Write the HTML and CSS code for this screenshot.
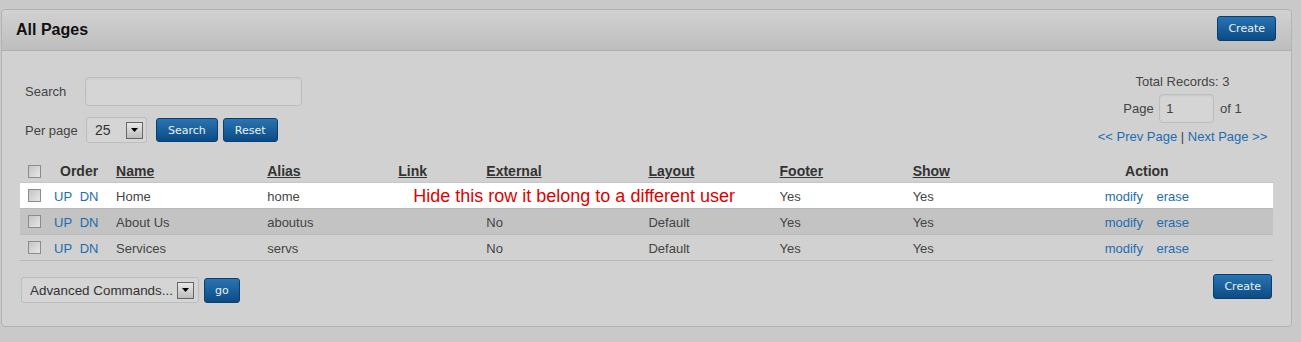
FILE: index.html
```html
<!DOCTYPE html>
<html lang="en">
<head>
    <meta charset="UTF-8">
    <title>All Pages</title>
    <link rel="stylesheet" href="styles.css">
</head>
<body>

    <div class="panel">
        <div class="panel-head">
            <h2>All Pages</h2>
            <button class="btn">Create</button>
        </div>

        <div class="panel-body">
            <div class="filters">
                <div class="filter-left">
                    <div class="filter-row">
                        <label class="lbl">Search</label>
                        <input class="field search-field" type="text">
                    </div>
                    <div class="filter-row row-gap">
                        <label class="lbl">Per page</label>
                        <div class="fake-select per-page">
                            <span>25</span>
                            <span class="arrow"><svg width="7" height="4" viewBox="0 0 7 4"><path d="M0 0h7L3.5 4z" fill="#000"/></svg></span>
                        </div>
                        <button class="btn btn-sm">Search</button>
                        <button class="btn btn-sm">Reset</button>
                    </div>
                </div>
                <div class="filter-right">
                    <div class="total">Total Records: 3</div>
                    <div class="pager">Page <input class="field page-field" type="text" value="1"> of 1</div>
                    <div class="pager-links"><a href="#">&lt;&lt; Prev Page</a> | <a href="#">Next Page &gt;&gt;</a></div>
                </div>
            </div>

            <table class="grid">
                <colgroup>
                    <col style="width:28px">
                    <col style="width:62px">
                    <col style="width:151px">
                    <col style="width:131px">
                    <col style="width:88px">
                    <col style="width:162px">
                    <col style="width:131px">
                    <col style="width:133px">
                    <col style="width:114px">
                    <col style="width:252px">
                </colgroup>
                <tr>
                    <th class="chk"><input type="checkbox"></th>
                    <th class="order">Order</th>
                    <th><a href="#">Name</a></th>
                    <th><a href="#">Alias</a></th>
                    <th><a href="#">Link</a></th>
                    <th><a href="#">External</a></th>
                    <th><a href="#">Layout</a></th>
                    <th><a href="#">Footer</a></th>
                    <th><a href="#">Show</a></th>
                    <th class="action">Action</th>
                </tr>
                <tr class="hidden-row">
                    <td class="chk"><input type="checkbox"></td>
                    <td class="order"><a href="#">UP</a> <a href="#">DN</a></td>
                    <td>Home</td>
                    <td>home</td>
                    <td colspan="3" class="note">Hide this row it belong to a different user</td>
                    <td>Yes</td>
                    <td>Yes</td>
                    <td class="action"><a href="#">modify</a> <a href="#">erase</a></td>
                </tr>
                <tr class="alt">
                    <td class="chk"><input type="checkbox"></td>
                    <td class="order"><a href="#">UP</a> <a href="#">DN</a></td>
                    <td>About Us</td>
                    <td>aboutus</td>
                    <td></td>
                    <td>No</td>
                    <td>Default</td>
                    <td>Yes</td>
                    <td>Yes</td>
                    <td class="action"><a href="#">modify</a> <a href="#">erase</a></td>
                </tr>
                <tr>
                    <td class="chk"><input type="checkbox"></td>
                    <td class="order"><a href="#">UP</a> <a href="#">DN</a></td>
                    <td>Services</td>
                    <td>servs</td>
                    <td></td>
                    <td>No</td>
                    <td>Default</td>
                    <td>Yes</td>
                    <td>Yes</td>
                    <td class="action"><a href="#">modify</a> <a href="#">erase</a></td>
                </tr>
            </table>

            <div class="panel-foot">
                <div class="commands">
                    <div class="fake-select adv">
                        <span class="adv-text">Advanced Commands...</span>
                        <span class="arrow"><svg width="7" height="4" viewBox="0 0 7 4"><path d="M0 0h7L3.5 4z" fill="#000"/></svg></span>
                    </div>
                    <button class="btn btn-go">go</button>
                </div>
                <button class="btn">Create</button>
            </div>
        </div>
    </div>

</body>
</html>
```

FILE: styles.css
```css
body {
    margin: 0;
    background-color: #c9c9c9;
    font-family: Arial, "Liberation Sans", sans-serif;
    font-size: 13px;
    color: #444;
}
a {
    color: #1f6db0;
    text-decoration: none;
}
.panel {
    margin: 9px 9px 0 1px;
    height: 318px;
    box-sizing: border-box;
    background-color: #d1d1d1;
    border: 1px solid #b3b3b3;
    border-radius: 4px;
}
.panel-head {
    height: 40px;
    display: flex;
    align-items: center;
    justify-content: space-between;
    padding: 0 14px 0 14px;
    background: linear-gradient(#d2d2d2, #bebebe);
    border-bottom: 1px solid #b0b0b0;
    border-radius: 4px 4px 0 0;
}
.panel-head h2 {
    margin: 0;
    font-size: 16px;
    color: #111;
}
.panel-head .btn {
    margin-top: -3px;
    margin-right: 1px;
}
.btn {
    height: 25px;
    padding: 0 10px;
    font-family: "DejaVu Sans", Verdana, sans-serif;
    font-size: 11px;
    color: #eaf2fa;
    background: linear-gradient(#2a74b1, #0b4b85);
    border: 1px solid #0a3f6d;
    border-radius: 3px;
    cursor: pointer;
}
.panel-body {
    padding: 26px 19px 0 18px;
}
.filters {
    display: flex;
    justify-content: space-between;
    padding: 0 4px 0 5px;
}
.filter-row {
    display: flex;
    align-items: center;
}
.row-gap {
    margin-top: 11px;
}
.lbl {
    width: 60px;
}
.field {
    box-sizing: border-box;
    height: 29px;
    background-color: #d5d5d5;
    border: 1px solid #bdbdbd;
    border-radius: 4px;
    box-shadow: inset 0 1px 2px rgba(0, 0, 0, 0.06);
    font-family: Arial, "Liberation Sans", sans-serif;
    font-size: 13px;
    color: #444;
}
.search-field {
    width: 217px;
}
.fake-select {
    box-sizing: border-box;
    height: 26px;
    display: flex;
    align-items: center;
    justify-content: space-between;
    background-color: #d5d5d5;
    border: 1px solid #bdbdbd;
    border-radius: 3px;
    color: #333;
}
.per-page {
    width: 61px;
    margin-left: 1px;
    padding: 0 3px 0 8px;
    font-size: 14px;
}
.arrow {
    box-sizing: border-box;
    flex: none;
    width: 17px;
    height: 17px;
    display: flex;
    align-items: center;
    justify-content: center;
    background: linear-gradient(#e8e8e8, #bdbdbd);
    border: 1px solid #666;
}
.btn-sm {
    margin-left: 5px;
    height: 24px;
    padding: 0 11px;
}
.per-page + .btn-sm {
    margin-left: 9px;
}
.filter-right {
    width: 171px;
    margin-top: -3px;
    text-align: center;
}
.total {
    line-height: 16px;
}
.pager {
    margin-top: 4px;
}
.page-field {
    width: 55px;
    padding: 0 6px;
    margin: 0 2px;
}
.pager-links {
    margin-top: 6px;
}
.grid {
    width: 1253px;
    margin-top: 16px;
    border-collapse: collapse;
    table-layout: fixed;
}
.grid th {
    height: 22px;
    padding: 0 6px;
    text-align: left;
    font-size: 14px;
    color: #333;
    border-bottom: 1px solid #c5c5c5;
}
.grid th a {
    color: #333;
    text-decoration: underline;
}
.grid td {
    height: 23px;
    padding: 2px 6px 0;
    border-bottom: 1px solid #b9b9b9;
    white-space: nowrap;
}
.grid .chk {
    padding: 0 0 0 8px;
}
.grid .order {
    padding-left: 6px;
}
.grid th.order {
    padding-left: 12px;
}
.grid .order a {
    margin-right: 4px;
}
.grid .action {
    text-align: center;
}
.grid .action a + a {
    margin-left: 10px;
}
input[type="checkbox"] {
    appearance: none;
    display: block;
    margin: 0;
    width: 13px;
    height: 13px;
    border: 1px solid #8c8c8c;
    background: linear-gradient(135deg, #c4c4c4, #e6e6e6);
}
.hidden-row td {
    background-color: #fff;
}
.alt td {
    background-color: #c3c3c3;
}
.grid .note {
    padding: 0 0 0 21px;
    font-size: 18px;
    line-height: 20px;
    color: #e00000;
}
.panel-foot {
    display: flex;
    justify-content: space-between;
    align-items: flex-start;
    margin-top: 13px;
}
.commands {
    display: flex;
    align-items: center;
    margin-top: 3px;
}
.adv {
    width: 178px;
    margin-left: 1px;
    padding: 0 4px 0 8px;
    font-size: 13.4px;
}
.adv-text {
    white-space: nowrap;
    overflow: hidden;
}
.btn-go {
    margin-left: 5px;
    height: 25px;
    padding: 0 10px;
}
```
